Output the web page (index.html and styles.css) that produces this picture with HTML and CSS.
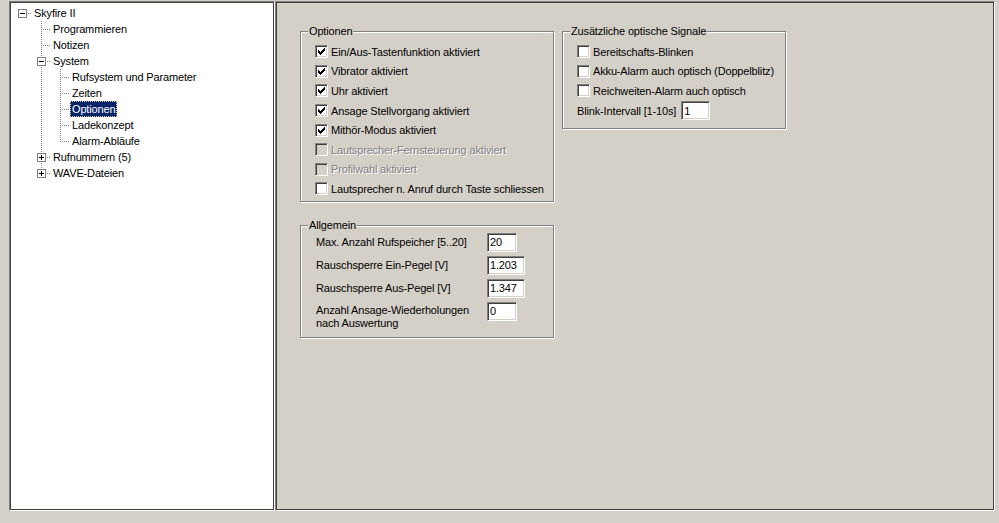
FILE: index.html
```html
<!DOCTYPE html>
<html lang="de">
<head>
<meta charset="utf-8">
<title>Skyfire II – Optionen</title>
<link rel="stylesheet" href="styles.css">
</head>
<body>
<div class="app">
  <!-- navigation tree -->
  <div class="tree sunken">
    <div class="row"><span class="c h"><span class="exp"></span></span><span class="lbl">Skyfire II</span></div>
    <div class="row"><span class="c"></span><span class="c t"></span><span class="lbl">Programmieren</span></div>
    <div class="row"><span class="c"></span><span class="c t"></span><span class="lbl">Notizen</span></div>
    <div class="row"><span class="c"></span><span class="c t"><span class="exp"></span></span><span class="lbl">System</span></div>
    <div class="row"><span class="c"></span><span class="c v"></span><span class="c t"></span><span class="lbl">Rufsystem und Parameter</span></div>
    <div class="row"><span class="c"></span><span class="c v"></span><span class="c t"></span><span class="lbl">Zeiten</span></div>
    <div class="row"><span class="c"></span><span class="c v"></span><span class="c t"></span><span class="lbl sel">Optionen</span></div>
    <div class="row"><span class="c"></span><span class="c v"></span><span class="c t"></span><span class="lbl">Ladekonzept</span></div>
    <div class="row"><span class="c"></span><span class="c v"></span><span class="c l"></span><span class="lbl">Alarm-Abläufe</span></div>
    <div class="row"><span class="c"></span><span class="c t"><span class="exp plus"></span></span><span class="lbl">Rufnummern (5)</span></div>
    <div class="row"><span class="c"></span><span class="c l"><span class="exp plus"></span></span><span class="lbl">WAVE-Dateien</span></div>
  </div>

  <!-- settings page -->
  <div class="pane sunken">
    <div class="col">
      <div class="group g-left">
        <div class="legend">Optionen</div>
        <div class="checks">
          <div class="chk"><span class="box"><svg viewBox="0 0 7 7" width="7" height="7"><path d="M0 2h1v3H0zM1 3h1v3H1zM2 4h1v3H2zM3 3h1v3H3zM4 2h1v3H4zM5 1h1v3H5zM6 0h1v3H6z"/></svg></span><span>Ein/Aus-Tastenfunktion aktiviert</span></div>
          <div class="chk"><span class="box"><svg viewBox="0 0 7 7" width="7" height="7"><path d="M0 2h1v3H0zM1 3h1v3H1zM2 4h1v3H2zM3 3h1v3H3zM4 2h1v3H4zM5 1h1v3H5zM6 0h1v3H6z"/></svg></span><span>Vibrator aktiviert</span></div>
          <div class="chk"><span class="box"><svg viewBox="0 0 7 7" width="7" height="7"><path d="M0 2h1v3H0zM1 3h1v3H1zM2 4h1v3H2zM3 3h1v3H3zM4 2h1v3H4zM5 1h1v3H5zM6 0h1v3H6z"/></svg></span><span>Uhr aktiviert</span></div>
          <div class="chk"><span class="box"><svg viewBox="0 0 7 7" width="7" height="7"><path d="M0 2h1v3H0zM1 3h1v3H1zM2 4h1v3H2zM3 3h1v3H3zM4 2h1v3H4zM5 1h1v3H5zM6 0h1v3H6z"/></svg></span><span>Ansage Stellvorgang aktiviert</span></div>
          <div class="chk"><span class="box"><svg viewBox="0 0 7 7" width="7" height="7"><path d="M0 2h1v3H0zM1 3h1v3H1zM2 4h1v3H2zM3 3h1v3H3zM4 2h1v3H4zM5 1h1v3H5zM6 0h1v3H6z"/></svg></span><span>Mithör-Modus aktiviert</span></div>
          <div class="chk off"><span class="box"></span><span>Lautsprecher-Fernsteuerung aktiviert</span></div>
          <div class="chk off"><span class="box"></span><span>Profilwahl aktiviert</span></div>
          <div class="chk"><span class="box"></span><span>Lautsprecher n. Anruf durch Taste schliessen</span></div>
        </div>
      </div>

      <div class="group g-left g-gen">
        <div class="legend">Allgemein</div>
        <div class="fields">
          <span class="flbl">Max. Anzahl Rufspeicher [5..20]</span><span class="edit w30">20</span>
          <span class="flbl">Rauschsperre Ein-Pegel [V]</span><span class="edit w38">1.203</span>
          <span class="flbl">Rauschsperre Aus-Pegel [V]</span><span class="edit w38">1.347</span>
          <span class="flbl multi">Anzahl Ansage-Wiederholungen<br>nach Auswertung</span><span class="edit w30">0</span>
        </div>
      </div>
    </div>

    <div class="col">
      <div class="group g-right">
        <div class="legend">Zusätzliche optische Signale</div>
        <div class="checks">
          <div class="chk"><span class="box"></span><span>Bereitschafts-Blinken</span></div>
          <div class="chk"><span class="box"></span><span>Akku-Alarm auch optisch (Doppelblitz)</span></div>
          <div class="chk"><span class="box"></span><span>Reichweiten-Alarm auch optisch</span></div>
          <div class="inline">
            <span>Blink-Intervall [1-10s]</span><span class="edit w29">1</span>
          </div>
        </div>
      </div>
    </div>
  </div>
</div>
</body>
</html>
```

FILE: styles.css
```css
body {
  margin: 0;
  background: #d4d0c8;
  font: 11px "Liberation Sans", Arial, sans-serif;
  letter-spacing: -0.15px;
  color: #000;
}

.app {
  display: flex;
  padding: 1px 0 0 9px;
}

/* classic sunken 3D frame */
.sunken {
  box-sizing: border-box;
  height: 510px;
  border: 1px solid;
  border-color: #808080 #fff #fff #808080;
  box-shadow: inset 0 0 0 1px #404040;
}

/* ---------- tree view ---------- */
.tree {
  width: 266px;
  background: #fff;
  padding: 3px 0 0 3px;
}

.row {
  display: flex;
  height: 16px;
  align-items: center;
}

.c {
  flex: none;
  width: 19px;
  height: 16px;
  box-sizing: border-box;
  padding: 4px 0 0 5px;
  background-repeat: no-repeat;
}

/* dotted connectors */
.c.v {
  background-image: repeating-linear-gradient(to bottom, #808080 0 1px, transparent 1px 2px);
  background-position: 9px 0;
  background-size: 1px 16px;
}
.c.t {
  background-image:
    repeating-linear-gradient(to bottom, #808080 0 1px, transparent 1px 2px),
    repeating-linear-gradient(to right, #808080 0 1px, transparent 1px 2px);
  background-position: 9px 0, 11px 8px;
  background-size: 1px 16px, 8px 1px;
}
.c.l {
  background-image:
    repeating-linear-gradient(to bottom, #808080 0 1px, transparent 1px 2px),
    repeating-linear-gradient(to right, #808080 0 1px, transparent 1px 2px);
  background-position: 9px 0, 11px 8px;
  background-size: 1px 9px, 8px 1px;
}
.c.h {
  background-image: repeating-linear-gradient(to right, #808080 0 1px, transparent 1px 2px);
  background-position: 11px 8px;
  background-size: 8px 1px;
}

/* expand / collapse button */
.exp {
  display: block;
  width: 9px;
  height: 9px;
  box-sizing: border-box;
  border: 1px solid #808080;
  background:
    linear-gradient(#000, #000) center / 5px 1px no-repeat,
    #fff;
}
.exp.plus {
  background:
    linear-gradient(#000, #000) center / 5px 1px no-repeat,
    linear-gradient(#000, #000) center / 1px 5px no-repeat,
    #fff;
}

.lbl {
  padding: 0 2px;
  line-height: 16px;
  white-space: nowrap;
}
.lbl.sel {
  background: #0a246a;
  color: #fff;
  outline: 1px dotted #d4c890;
  outline-offset: -1px;
}

/* ---------- settings pane ---------- */
.pane {
  width: 720px;
  display: flex;
  align-items: flex-start;
  gap: 8px;
  padding: 29px 0 0 24px;
}

.col {
  display: flex;
  flex-direction: column;
}

/* etched group box */
.group {
  box-sizing: border-box;
  border: 1px solid #808080;
  box-shadow: inset 1px 1px 0 #fff, 1px 1px 0 #fff;
}
.g-left { width: 254px; }
.g-right { width: 224px; }
.g-gen { margin-top: 23px; }

.legend {
  width: fit-content;
  margin: -7px 0 0 7px;
  padding: 0 1px;
  background: #d4d0c8;
  line-height: 13px;
  white-space: nowrap;
}

.checks {
  padding: 4px 0 2px 14px;
}
.g-right .checks { padding-bottom: 7px; }

.chk {
  display: flex;
  align-items: center;
  height: 19.6px;
  white-space: nowrap;
}

.box {
  flex: none;
  width: 13px;
  height: 13px;
  box-sizing: border-box;
  margin-right: 3px;
  padding: 2px;
  background: #fff;
  border: 1px solid;
  border-color: #808080 #fff #fff #808080;
  box-shadow: inset 1px 1px 0 #404040, inset -1px -1px 0 #d4d0c8;
}
.box svg {
  display: block;
  shape-rendering: crispEdges;
}

.chk.off { color: #808080; text-shadow: 1px 1px 0 #fff; }
.chk.off .box { background: #d4d0c8; }

.inline {
  display: flex;
  align-items: center;
  height: 20px;
  gap: 5px;
  white-space: nowrap;
}

/* edit fields */
.edit {
  display: flex;
  align-items: center;
  box-sizing: border-box;
  height: 19px;
  padding: 0 2px;
  background: #fff;
  border: 1px solid;
  border-color: #808080 #fff #fff #808080;
  box-shadow: inset 1px 1px 0 #404040, inset -1px -1px 0 #d4d0c8;
}
.w29 { width: 29px; }
.w30 { width: 30px; }
.w38 { width: 38px; }

.fields {
  display: grid;
  grid-template-columns: 171px auto;
  justify-content: start;
  row-gap: 4px;
  padding: 1px 0 7px 15px;
}
.flbl {
  align-self: center;
  line-height: 13px;
  white-space: nowrap;
}
.flbl.multi {
  align-self: start;
  padding-top: 2px;
}
.fields .edit { align-self: start; }
```
